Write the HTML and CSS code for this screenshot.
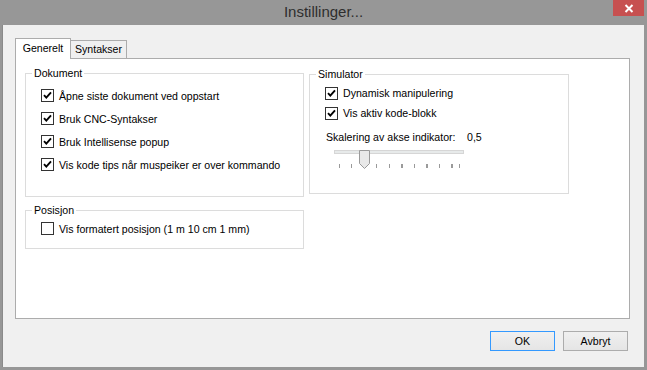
FILE: index.html
```html
<!DOCTYPE html>
<html lang="no">
<head>
    <meta charset="UTF-8">
    <title>Instillinger...</title>
    <link rel="stylesheet" href="styles.css">
</head>
<body>

    <div class="window">
        <!-- Title bar -->
        <div class="titlebar">
            <span class="title">Instillinger...</span>
            <button class="close-btn" aria-label="Lukk">
                <svg width="10" height="9" viewBox="0 0 10 9">
                    <path d="M1.5 1 L8.5 8 M8.5 1 L1.5 8" stroke="#fff" stroke-width="2" fill="none"/>
                </svg>
            </button>
        </div>

        <div class="client">
            <!-- Tabs -->
            <div class="tabs">
                <div class="tab tab-active">Generelt</div>
                <div class="tab">Syntakser</div>
            </div>

            <div class="tab-page">
                <div class="col-left">
                    <fieldset class="group group-doc">
                        <legend>Dokument</legend>
                        <div class="check-list">
                            <label class="check"><span class="box checked"></span>Åpne siste dokument ved oppstart</label>
                            <label class="check"><span class="box checked"></span>Bruk CNC-Syntakser</label>
                            <label class="check"><span class="box checked"></span>Bruk Intellisense popup</label>
                            <label class="check"><span class="box checked"></span>Vis kode tips når muspeiker er over kommando</label>
                        </div>
                    </fieldset>

                    <fieldset class="group group-pos">
                        <legend>Posisjon</legend>
                        <div class="check-list">
                            <label class="check"><span class="box"></span>Vis formatert posisjon (1 m 10 cm 1 mm)</label>
                        </div>
                    </fieldset>
                </div>

                <fieldset class="group group-sim">
                    <legend>Simulator</legend>
                    <div class="check-list">
                        <label class="check"><span class="box checked"></span>Dynamisk manipulering</label>
                        <label class="check"><span class="box checked"></span>Vis aktiv kode-blokk</label>
                    </div>

                    <div class="scale-row">
                        <span class="scale-label">Skalering av akse indikator:</span>
                        <span class="scale-value">0,5</span>
                    </div>

                    <!-- Trackbar -->
                    <div class="slider">
                        <div class="slider-track"></div>
                        <svg class="slider-thumb" width="11" height="19" viewBox="0 0 11 19">
                            <path d="M0.5 0.5 H10.5 V13.5 L5.5 18.5 L0.5 13.5 Z" fill="#e9e9e9" stroke="#9a9a9a"/>
                        </svg>
                        <div class="slider-ticks"></div>
                    </div>
                </fieldset>
            </div>

            <div class="actions">
                <button class="btn btn-default">OK</button>
                <button class="btn">Avbryt</button>
            </div>
        </div>
    </div>

</body>
</html>
```

FILE: styles.css
```css
/* General styling */
body {
    margin: 0;
    background-color: #979797;
    font-family: "Liberation Sans", Arial, sans-serif;
    font-size: 10.6px;
    color: #000;
}
.window {
    height: 370px;
    display: flex;
    flex-direction: column;
}

/* Title bar */
.titlebar {
    height: 25px;
    display: grid;
    grid-template-columns: 1fr auto 1fr;
    align-items: start;
}
.title {
    grid-column: 2;
    font-size: 15px;
    line-height: 24px;
    color: #2e2e2e;
}
.close-btn {
    grid-column: 3;
    justify-self: end;
    width: 31px;
    height: 16px;
    margin-right: 3px;
    padding: 0;
    border: none;
    background-color: #c75050;
    display: flex;
    align-items: center;
    justify-content: center;
}

/* Client area */
.client {
    flex: 1;
    margin: 0 3px 3px;
    padding: 13px 14px 0 12px;
    background-color: #f0f0f0;
    border-left: 1px solid #8a8a8a;
    margin-left: 2px;
}

/* Tabs */
.tabs {
    display: flex;
    align-items: flex-end;
    height: 20px;
}
.tab {
    box-sizing: border-box;
    width: 56px;
    height: 18px;
    line-height: 16px;
    text-align: center;
    border: 1px solid #acacac;
    border-bottom: none;
    border-left: none;
    background-color: #f0f0f0;
}
.tab-active {
    position: relative;
    z-index: 1;
    height: 21px;
    margin-bottom: -1px;
    line-height: 18px;
    border-left: 1px solid #acacac;
    background-color: #fff;
}

.tab-page {
    box-sizing: border-box;
    height: 261px;
    padding: 7px 0 0 9px;
    border: 1px solid #acacac;
    background-color: #fff;
    display: flex;
    align-items: flex-start;
    gap: 5px;
}

/* Group boxes */
.group {
    box-sizing: border-box;
    margin: 0;
    padding: 0;
    min-width: 0;
    border: 1px solid #dcdcdc;
}
.group legend {
    margin-left: 6px;
    padding: 0 2px;
    line-height: 14px;
}
.group-doc {
    width: 279px;
    padding-bottom: 20px;
}
.group-pos {
    width: 279px;
    margin-top: 6px;
    padding-bottom: 9px;
}
.group-sim {
    width: 260px;
    margin-top: 1px;
    padding-bottom: 25px;
}

/* Checkboxes */
.check-list {
    margin-top: 4px;
}
.check {
    display: flex;
    align-items: center;
    gap: 5px;
    height: 23px;
    padding-left: 15px;
}
.group-pos .check-list {
    margin-top: 1px;
}
.group-pos .check {
    height: 21px;
}
.group-sim .check-list {
    margin-top: 2px;
}
.group-sim .check {
    height: 20px;
}
.box {
    box-sizing: border-box;
    width: 13px;
    height: 13px;
    border: 1px solid #333;
    background-color: #fff;
}
.box.checked {
    background: #fff url("data:image/svg+xml,%3Csvg xmlns='http://www.w3.org/2000/svg' width='11' height='11'%3E%3Cpath d='M2 5.2 L4.3 7.6 L9 2.4' stroke='%23000' stroke-width='1.9' fill='none'/%3E%3C/svg%3E") no-repeat center;
}

/* Scale trackbar */
.scale-row {
    display: flex;
    margin: 7px 0 0 16px;
    line-height: 14px;
}
.scale-label {
    width: 141px;
}
.slider {
    position: relative;
    width: 130px;
    margin: 3px 0 0 24px;
}
.slider-track {
    box-sizing: border-box;
    height: 4px;
    margin-top: 6px;
    background-color: #e7eaea;
    border: 1px solid #d6d6d6;
}
.slider-thumb {
    position: absolute;
    top: 0;
    left: 25px;
}
.slider-ticks {
    width: 120px;
    height: 4px;
    margin: 10px 0 0 5px;
    border-right: 1px solid #9a9a9a;
    background: repeating-linear-gradient(to right, #9a9a9a 0 1px, transparent 1px 12.5px);
}

/* Dialog buttons */
.actions {
    display: flex;
    justify-content: flex-end;
    gap: 8px;
    margin-top: 12px;
    padding-right: 2px;
}
.btn {
    box-sizing: border-box;
    width: 65px;
    height: 20px;
    padding: 0;
    font-family: inherit;
    font-size: inherit;
    color: #000;
    border: 1px solid #acacac;
    background: linear-gradient(#f0f0f0, #e5e5e5);
}
.btn-default {
    border-color: #3399ff;
}
```
